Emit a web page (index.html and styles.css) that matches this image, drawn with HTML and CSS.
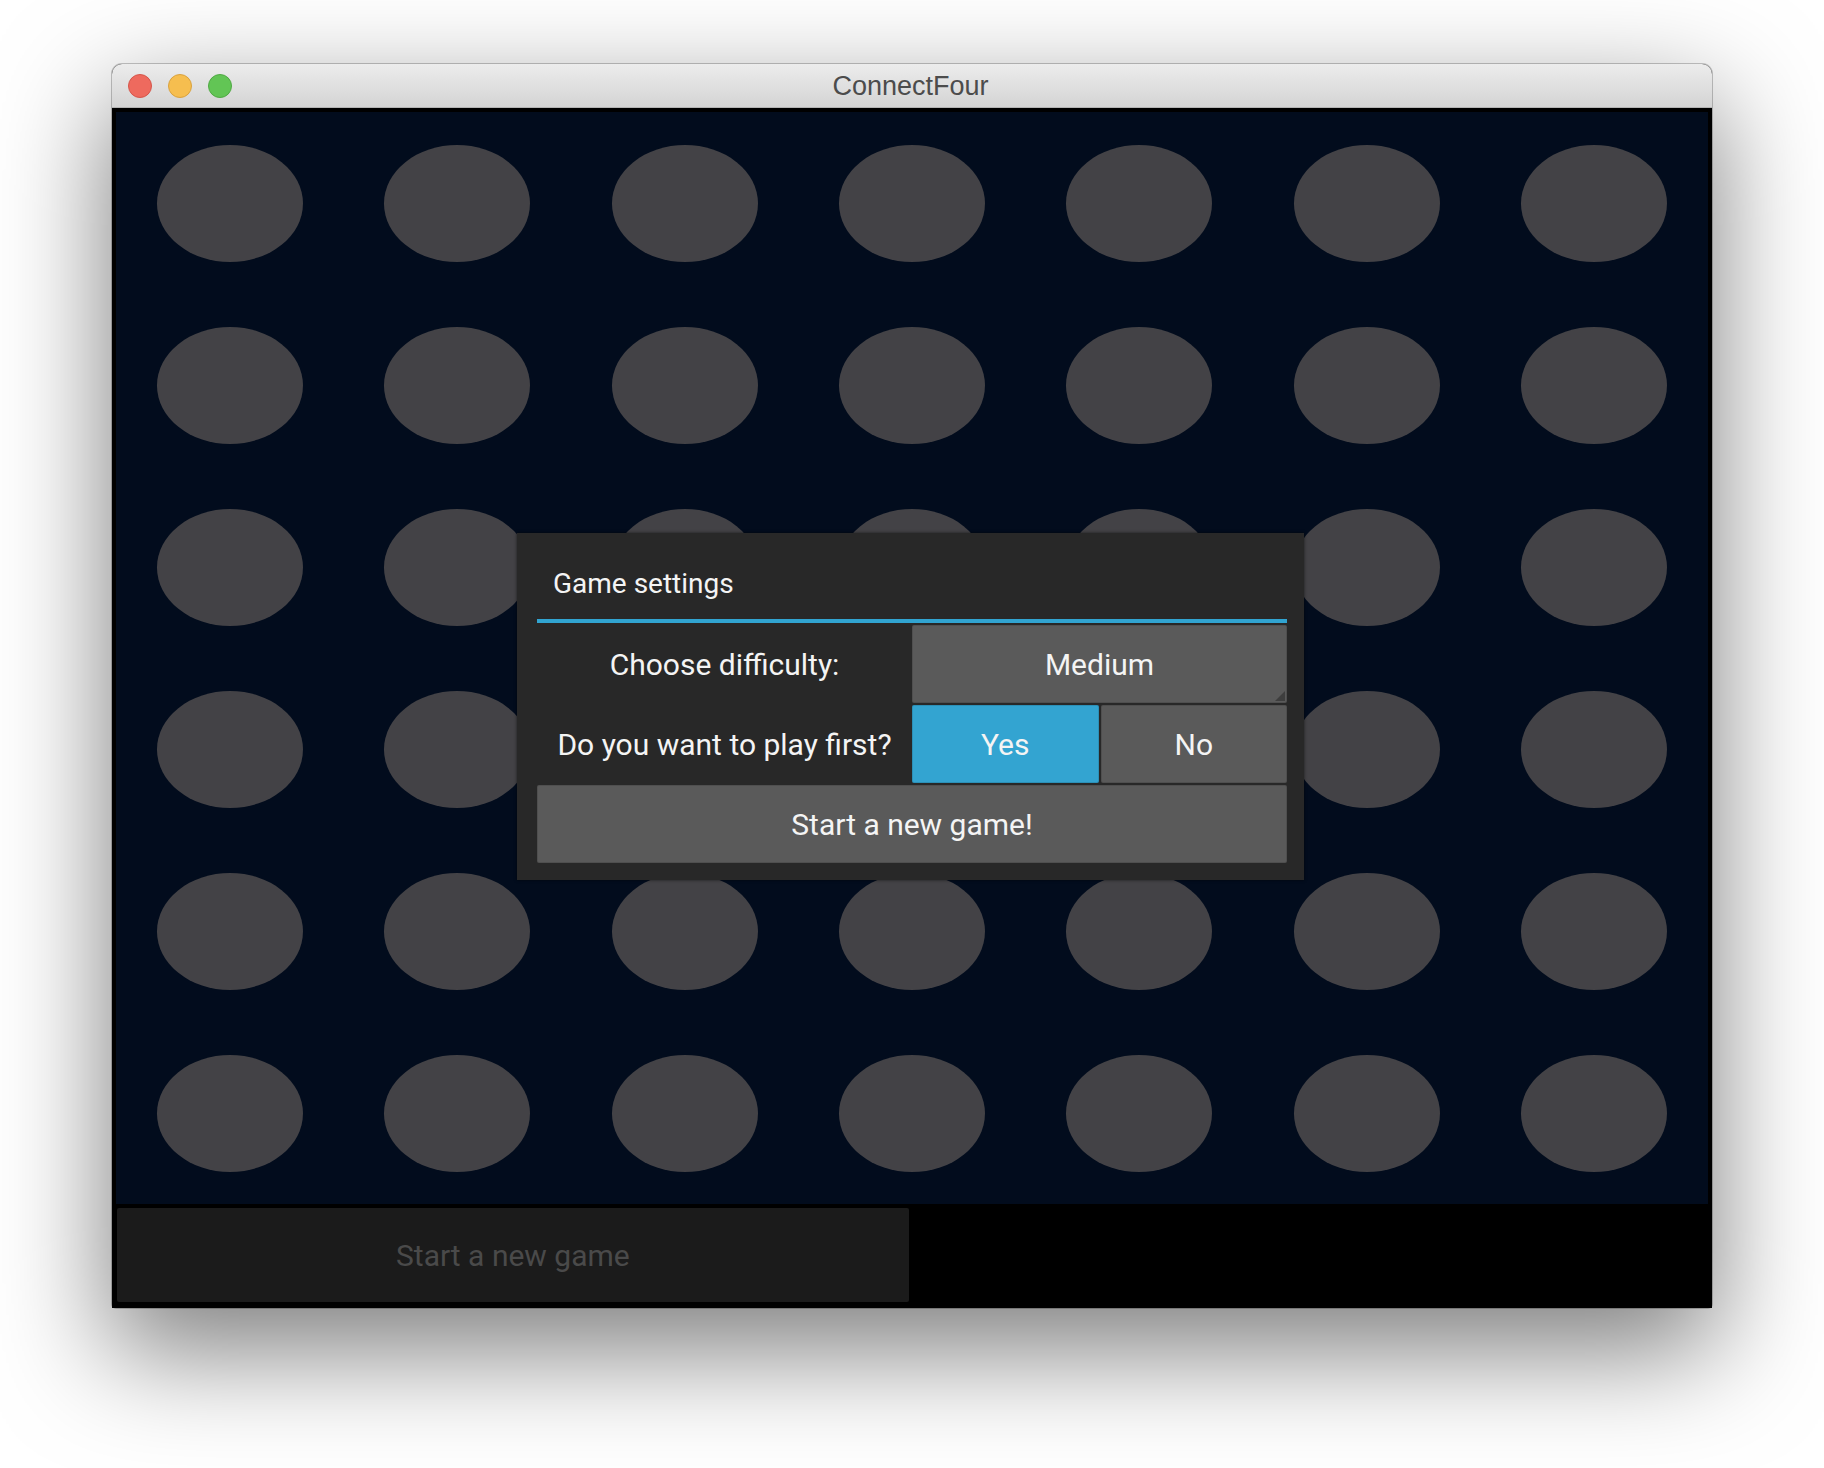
FILE: index.html
```html
<!DOCTYPE html>
<html lang="en">
<head>
<meta charset="utf-8">
<title>ConnectFour</title>
<link rel="stylesheet" href="styles.css">
</head>
<body>
<div class="window">
  <div class="titlebar">
    <div class="lights">
      <span class="light red"></span>
      <span class="light yellow"></span>
      <span class="light green"></span>
    </div>
    <div class="title">ConnectFour</div>
    <div class="spacer"></div>
  </div>
  <div class="content">
    <div class="board">
      <div class="cell"><div class="hole"></div></div><div class="cell"><div class="hole"></div></div><div class="cell"><div class="hole"></div></div><div class="cell"><div class="hole"></div></div><div class="cell"><div class="hole"></div></div><div class="cell"><div class="hole"></div></div><div class="cell"><div class="hole"></div></div>
      <div class="cell"><div class="hole"></div></div><div class="cell"><div class="hole"></div></div><div class="cell"><div class="hole"></div></div><div class="cell"><div class="hole"></div></div><div class="cell"><div class="hole"></div></div><div class="cell"><div class="hole"></div></div><div class="cell"><div class="hole"></div></div>
      <div class="cell"><div class="hole"></div></div><div class="cell"><div class="hole"></div></div><div class="cell"><div class="hole"></div></div><div class="cell"><div class="hole"></div></div><div class="cell"><div class="hole"></div></div><div class="cell"><div class="hole"></div></div><div class="cell"><div class="hole"></div></div>
      <div class="cell"><div class="hole"></div></div><div class="cell"><div class="hole"></div></div><div class="cell"><div class="hole"></div></div><div class="cell"><div class="hole"></div></div><div class="cell"><div class="hole"></div></div><div class="cell"><div class="hole"></div></div><div class="cell"><div class="hole"></div></div>
      <div class="cell"><div class="hole"></div></div><div class="cell"><div class="hole"></div></div><div class="cell"><div class="hole"></div></div><div class="cell"><div class="hole"></div></div><div class="cell"><div class="hole"></div></div><div class="cell"><div class="hole"></div></div><div class="cell"><div class="hole"></div></div>
      <div class="cell"><div class="hole"></div></div><div class="cell"><div class="hole"></div></div><div class="cell"><div class="hole"></div></div><div class="cell"><div class="hole"></div></div><div class="cell"><div class="hole"></div></div><div class="cell"><div class="hole"></div></div><div class="cell"><div class="hole"></div></div>
    </div>
    <div class="bottombar">
      <div class="status-btn">Start a new game</div>
      <div class="status-empty"></div>
    </div>
    <div class="dialog">
      <div class="dialog-title">Game settings</div>
      <div class="dialog-rule"></div>
      <div class="dialog-rows">
        <div class="label">Choose difficulty:</div>
        <div class="combo">Medium</div>
        <div class="label">Do you want to play first?</div>
        <div class="toggle">
          <div class="btn btn-active">Yes</div>
          <div class="btn">No</div>
        </div>
        <div class="btn btn-wide">Start a new game!</div>
      </div>
    </div>
  </div>
</div>
</body>
</html>
```

FILE: styles.css
```css
html, body {
  margin: 0;
  padding: 0;
  background: #ffffff;
}

body {
  width: 1824px;
  height: 1468px;
  overflow: hidden;
}

.window {
  margin: 64px 0 0 112px;
  width: 1600px;
  height: 1244px;
  border-radius: 10px 10px 4px 4px;
  box-shadow: 0 0 0 1px rgba(0, 0, 0, 0.22), 0 40px 110px 4px rgba(0, 0, 0, 0.5);
  display: flex;
  flex-direction: column;
  background: #000;
}

.titlebar {
  height: 44px;
  flex: none;
  box-sizing: border-box;
  border-radius: 10px 10px 0 0;
  background: linear-gradient(#ececec, #d4d4d4);
  border-bottom: 1px solid #b4b4b4;
  display: grid;
  grid-template-columns: 1fr auto 1fr;
  align-items: center;
}

.lights {
  display: flex;
  gap: 16px;
  padding-left: 16px;
}

.light {
  width: 24px;
  height: 24px;
  border-radius: 50%;
  box-sizing: border-box;
}

.red { background: #ee6a5e; border: 1px solid #d5564b; }
.yellow { background: #f6be4f; border: 1px solid #d9a23f; }
.green { background: #62c555; border: 1px solid #50a944; }

.title {
  font-family: "Liberation Sans", Arial, sans-serif;
  font-size: 27px;
  color: #4c4c4c;
  line-height: 44px;
  margin-right: 3px;
}

.content {
  flex: 1;
  position: relative;
  background: #000;
  padding: 4px 4px 0 4px;
  display: flex;
  flex-direction: column;
}

.board {
  height: 1092px;
  background: #020c1d;
  display: grid;
  grid-template-columns: repeat(7, 1fr);
  grid-template-rows: repeat(6, 1fr);
  justify-items: center;
  align-items: center;
}

.hole {
  width: 146px;
  height: 117px;
  border-radius: 50%;
  background: #434246;
}

.bottombar {
  flex: 1;
  display: grid;
  grid-template-columns: 1fr 1fr;
  padding: 4px 0 6px 0;
  margin-left: 0.5px;
}

.status-btn {
  margin-right: 3px;
  background: #1b1b1b;
  border-radius: 2px;
  display: flex;
  align-items: center;
  justify-content: center;
  font-family: Roboto, "Noto Sans", sans-serif;
  font-size: 30px;
  color: #4a4a4a;
}

.dialog {
  position: absolute;
  left: 405px;
  top: 425px;
  width: 787px;
  box-sizing: border-box;
  padding: 0 17px 17px 20px;
  background: #282828;
  box-shadow: 0 0 3px rgba(0, 0, 0, 0.6);
  font-family: Roboto, "Noto Sans", sans-serif;
  color: #f4f4f4;
}

.dialog-title {
  font-size: 28px;
  line-height: 40px;
  padding: 31px 16px 15px;
}

.dialog-rule {
  height: 4px;
  background: #31a4d1;
}

.dialog-rows {
  margin-top: 2px;
  display: grid;
  grid-template-columns: 1fr 1fr;
  grid-auto-rows: 78px;
  gap: 2px 0;
  font-size: 30px;
}

.label {
  display: flex;
  align-items: center;
  justify-content: center;
}

.combo {
  position: relative;
  background: #5a5a5a;
  border-radius: 2px;
  display: flex;
  align-items: center;
  justify-content: center;
  box-shadow: inset 0 0 0 1px rgba(0, 0, 0, 0.12);
}

.combo::after {
  content: "";
  position: absolute;
  right: 2px;
  bottom: 2px;
  width: 0;
  height: 0;
  border-left: 10px solid transparent;
  border-bottom: 10px solid #3e3e3e;
}

.toggle {
  display: grid;
  grid-template-columns: 1fr 1fr;
  gap: 2px;
}

.btn {
  background: #5a5a5a;
  border-radius: 2px;
  display: flex;
  align-items: center;
  justify-content: center;
  box-shadow: inset 0 0 0 1px rgba(0, 0, 0, 0.12);
}

.btn-active {
  background: #33a4d1;
}

.btn-wide {
  grid-column: 1 / 3;
}
```
